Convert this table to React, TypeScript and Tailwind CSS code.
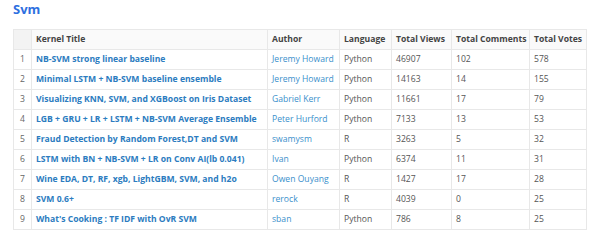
const rows = [
  { title: "NB-SVM strong linear baseline", author: "Jeremy Howard", lang: "Python", views: 46907, comments: 102, votes: 578 },
  { title: "Minimal LSTM + NB-SVM baseline ensemble", author: "Jeremy Howard", lang: "Python", views: 14163, comments: 14, votes: 155 },
  { title: "Visualizing KNN, SVM, and XGBoost on Iris Dataset", author: "Gabriel Kerr", lang: "Python", views: 11661, comments: 17, votes: 79 },
  { title: "LGB + GRU + LR + LSTM + NB-SVM Average Ensemble", author: "Peter Hurford", lang: "Python", views: 7133, comments: 13, votes: 53 },
  { title: "Fraud Detection by Random Forest,DT and SVM", author: "swamysm", lang: "R", views: 3263, comments: 5, votes: 32 },
  { title: "LSTM with BN + NB-SVM + LR on Conv AI(lb 0.041)", author: "Ivan", lang: "Python", views: 6374, comments: 11, votes: 31 },
  { title: "Wine EDA, DT, RF, xgb, LightGBM, SVM, and h2o", author: "Owen Ouyang", lang: "R", views: 1427, comments: 17, votes: 28 },
  { title: "SVM 0.6+", author: "rerock", lang: "R", views: 4039, comments: 0, votes: 25 },
  { title: "What's Cooking : TF IDF with OvR SVM", author: "sban", lang: "Python", views: 786, comments: 8, votes: 25 },
];

export default function App() {
  const cell = "border border-[#e8e8e8] px-[4px] h-[20px] align-middle whitespace-nowrap overflow-hidden";

  return (
    <div className="w-[597px] h-[240px] bg-white font-['Open_Sans',sans-serif] text-[8.6px] text-[#555]">
      <div className="px-[13px]">
        <h1 className="text-[13px] font-bold text-[#2d6fe0] leading-[18px]">Svm</h1>

        <table className="mt-[11px] w-[574px] table-fixed border-collapse text-left">
          <thead className="bg-[#fafafa]">
            <tr className="font-bold text-[#444]">
              <th className={`${cell} w-[18px] bg-[#f3f3f3]`}></th>
              <th className={`${cell} w-[236px]`}>Kernel Title</th>
              <th className={`${cell} w-[72px]`}>Author</th>
              <th className={`${cell} w-[52px]`}>Language</th>
              <th className={`${cell} w-[60px]`}>Total Views</th>
              <th className={`${cell} w-[78px]`}>Total Comments</th>
              <th className={cell}>Total Votes</th>
            </tr>
          </thead>
          <tbody>
            {rows.map((row, i) => (
              <tr key={row.title}>
                <td className={`${cell} text-center text-[#666]`}>{i + 1}</td>
                <td className={`${cell} font-bold text-[#2c7cc0]`}>{row.title}</td>
                <td className={`${cell} text-[#3a8fcb]`}>{row.author}</td>
                <td className={cell}>{row.lang}</td>
                <td className={cell}>{row.views}</td>
                <td className={cell}>{row.comments}</td>
                <td className={cell}>{row.votes}</td>
              </tr>
            ))}
          </tbody>
        </table>
      </div>
    </div>
  );
}
